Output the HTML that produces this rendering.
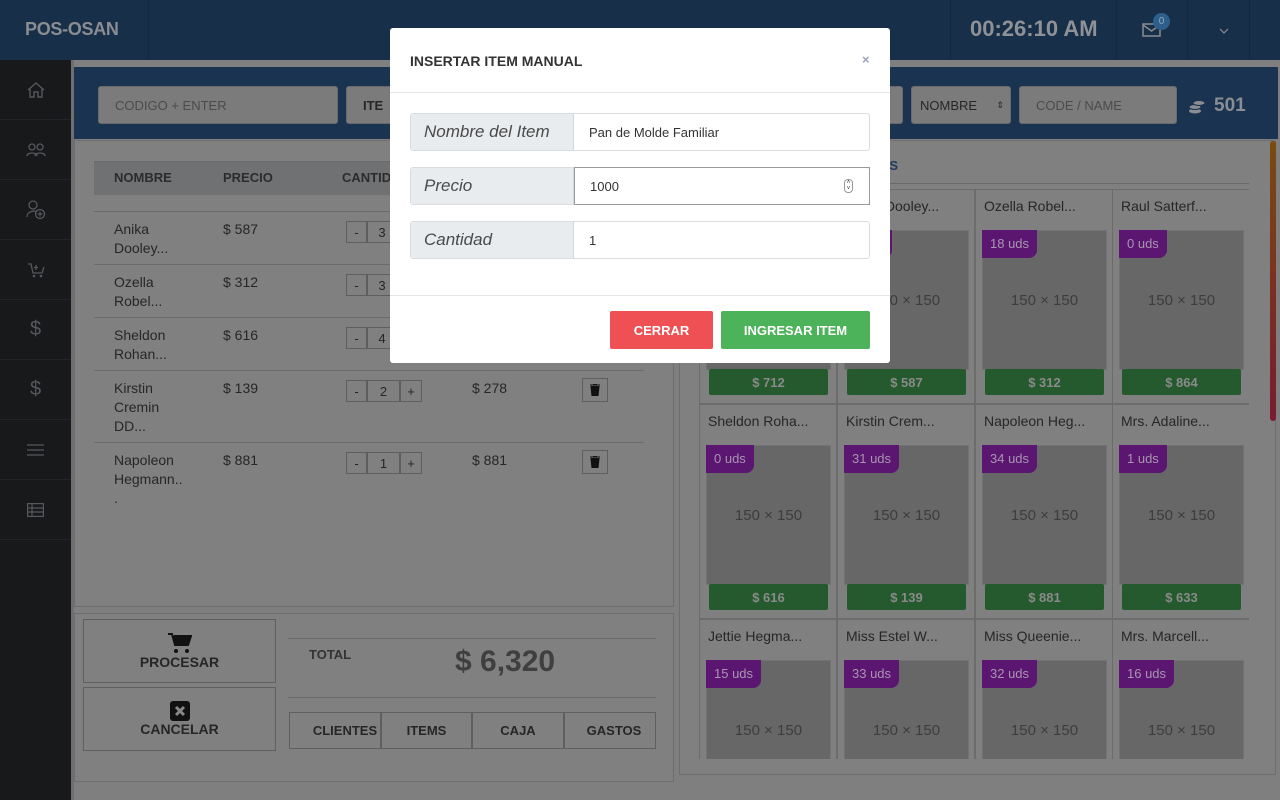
<!DOCTYPE html>
<html><head><meta charset="utf-8"><style>
*{box-sizing:border-box;margin:0;padding:0}
body{width:1280px;height:800px;overflow:hidden;background:#7f7f7f;font-family:"Liberation Sans",sans-serif;position:relative;color:#222}
.a{position:absolute}
.hdr{left:0;top:0;width:1280px;height:60px;background:#172f48}
.side{left:0;top:60px;width:71px;height:740px;background:#18191b}
.si{left:0;width:71px;height:60px;border-bottom:1px solid #222427;display:flex;align-items:center;justify-content:center}
.inp{background:#7b7b7b;border:1px solid #6a6a6a;border-radius:3px;color:#4b4b4b;font-size:13px;padding-left:16px;display:flex;align-items:center}
.panel{border:1px solid #6e6e6e;background:#808080}
.row{left:94px;width:550px;border-top:1px solid #6b6b6b;font-size:14px;color:#262626;line-height:19px}
.qty{display:flex;height:22px}
.qty span{border:1px solid #5e5e5e;display:flex;align-items:center;justify-content:center;font-size:13px}
.trash{width:26px;height:24px;border:1px solid #5e5e5e;display:flex;align-items:center;justify-content:center}
.cell{width:138px;height:215px;border:1px solid #6c6c6c}
.cell .nm{position:absolute;left:8px;top:8px;font-size:14px;color:#262626}
.cell .img{position:absolute;left:6px;top:40px;width:125px;height:140px;background:#676767;border:1px solid #737373;display:flex;align-items:center;justify-content:center;color:#3d3d3d;font-size:15px}
.cell .bd{position:absolute;left:6px;top:40px;height:28px;padding:0 8px;background:#5a1670;color:#a995b0;font-size:13px;line-height:28px;border-bottom-right-radius:8px}
.cell .pr{position:absolute;left:9px;top:179px;width:119px;height:26px;background:#255a2e;color:#8a8a8a;font-weight:bold;font-size:13px;display:flex;align-items:center;justify-content:center;border-radius:2px}
.btn2{border:1px solid #5f5f5f;font-size:13px;font-weight:bold;color:#262626;display:flex;align-items:center;justify-content:center}
.modal{left:390px;top:28px;width:500px;height:335px;background:#fff;border-radius:3px}
.grp{left:20px;width:460px;height:38px;border:1px solid #dadde0;border-radius:3px;display:flex}
.grp .l{width:163px;background:#e9ecef;border-right:1px solid #d5d8db;font-style:italic;font-size:17px;color:#4a4a4a;padding-left:13px;display:flex;align-items:center}
.grp .v{flex:1;font-size:13px;color:#333;padding-left:15px;display:flex;align-items:center}
</style></head><body>
<div class="a hdr"></div>
<div class="a" style="left:148px;top:0;width:1px;height:60px;background:#13283e"></div>
<div class="a" style="left:25px;top:19px;font-size:18px;font-weight:bold;color:#8a8d92;letter-spacing:-0.3px">POS-OSAN</div>
<div class="a" style="left:950px;top:0;width:1px;height:60px;background:#13283e"></div>
<div class="a" style="left:970px;top:16px;font-size:22px;font-weight:bold;color:#8e9196">00:26:10 AM</div>
<div class="a" style="left:1116px;top:0;width:1px;height:60px;background:#13283e"></div>
<div class="a" style="left:1187px;top:0;width:1px;height:60px;background:#13283e"></div>
<div class="a" style="left:1249px;top:0;width:1px;height:60px;background:#13283e"></div>
<svg class="a" style="left:1142px;top:23px" width="20" height="15"><rect x="1" y="1" width="17" height="12" fill="none" stroke="#8a8d92" stroke-width="1.5"/><path d="M1 2l8.5 6 8.5-6" fill="none" stroke="#8a8d92" stroke-width="1.5"/></svg>
<div class="a" style="left:1153px;top:13px;width:17px;height:17px;border-radius:50%;background:#2e5f8c;color:#8fa7bd;font-size:10px;text-align:center;line-height:17px">0</div>
<svg class="a" style="left:1219px;top:28px" width="10" height="6"><path d="M1 1l4 4 4-4" fill="none" stroke="#8a8d92" stroke-width="1.2"/></svg>

<div class="a side"></div>
<div class="a si" style="top:60px"><svg width="20" height="18"><path d="M2 9L10 2l8 7M4 7v9h4v-5h4v5h4V7" fill="none" stroke="#55585c" stroke-width="1.4"/></svg></div>
<div class="a si" style="top:120px"><svg width="20" height="14"><circle cx="6" cy="4" r="3" fill="none" stroke="#55585c" stroke-width="1.3"/><circle cx="14" cy="4" r="3" fill="none" stroke="#55585c" stroke-width="1.3"/><path d="M1 13c0-4 10-4 10 0M9 13c0-4 10-4 10 0" fill="none" stroke="#55585c" stroke-width="1.3"/></svg></div>
<div class="a si" style="top:180px"><svg width="20" height="20"><circle cx="7" cy="5" r="4" fill="none" stroke="#55585c" stroke-width="1.3"/><path d="M1 17c0-6 8-7 10-5" fill="none" stroke="#55585c" stroke-width="1.3"/><circle cx="14" cy="14" r="4.5" fill="none" stroke="#55585c" stroke-width="1.3"/><path d="M14 11.5v5M11.5 14h5" stroke="#55585c" stroke-width="1.2"/></svg></div>
<div class="a si" style="top:240px"><svg width="18" height="16"><path d="M1 2h3l2 9h9l2-6M9 3v5M7 5.5h4" fill="none" stroke="#55585c" stroke-width="1.3"/><circle cx="7" cy="14" r="1.3" fill="#55585c"/><circle cx="14" cy="14" r="1.3" fill="#55585c"/></svg></div>
<div class="a si" style="top:300px;color:#55585c;font-size:20px">$</div>
<div class="a si" style="top:360px;color:#55585c;font-size:20px">$</div>
<div class="a si" style="top:420px"><svg width="17" height="12"><path d="M0 1h17M0 6h17M0 11h17" stroke="#55585c" stroke-width="1.3"/></svg></div>
<div class="a si" style="top:480px"><svg width="17" height="14"><rect x=".6" y=".6" width="15.8" height="12.8" fill="none" stroke="#55585c" stroke-width="1.2"/><path d="M0 5h17M0 9h17M5 1v12" stroke="#55585c" stroke-width="1.2"/></svg></div>
<div class="a" style="left:71px;top:60px;width:3px;height:740px;background:#6f6f6f"></div>

<div class="a" style="left:74px;top:67px;width:1204px;height:72px;background:#1a3350"></div>
<div class="a inp" style="left:98px;top:86px;width:240px;height:38px">CODIGO + ENTER</div>
<div class="a inp" style="left:346px;top:86px;width:60px;height:38px;font-weight:bold;color:#262626">ITE</div>
<div class="a inp" style="left:870px;top:86px;width:33px;height:38px"></div>
<div class="a inp" style="left:911px;top:86px;width:100px;height:38px;color:#262626;padding-left:8px">NOMBRE<span style="position:absolute;right:6px;font-size:9px">⇕</span></div>
<div class="a inp" style="left:1019px;top:86px;width:158px;height:38px">CODE / NAME</div>
<svg class="a" style="left:1188px;top:98px" width="18" height="17"><ellipse cx="7" cy="13" rx="6" ry="2.5" fill="#8a8d92"/><ellipse cx="7" cy="9" rx="6" ry="2.5" fill="#8a8d92" stroke="#1a3350"/><ellipse cx="11" cy="5" rx="6" ry="2.5" fill="#8a8d92" stroke="#1a3350"/></svg>
<div class="a" style="left:1214px;top:95px;font-size:19px;font-weight:bold;color:#8a8d92">501</div>

<div class="a panel" style="left:74px;top:140px;width:600px;height:467px"></div>
<div class="a" style="left:94px;top:161px;width:560px;height:34px;background:#707173;border-top:1px solid #6a6a6a"></div>
<div class="a" style="left:114px;top:170px;font-size:13px;font-weight:bold;color:#2c2c2c">NOMBRE</div>
<div class="a" style="left:223px;top:170px;font-size:13px;font-weight:bold;color:#2c2c2c">PRECIO</div>
<div class="a" style="left:342px;top:170px;font-size:13px;font-weight:bold;color:#2c2c2c">CANTID</div>

<div class="a row" style="top:211px;height:53px"><div class="a" style="left:20px;top:8px">Anika<br>Dooley...</div><div class="a" style="left:129px;top:8px">$ 587</div><div class="a qty" style="left:252px;top:9px"><span style="width:21px">-</span><span style="width:30px">3</span></div></div>
<div class="a row" style="top:264px;height:53px"><div class="a" style="left:20px;top:8px">Ozella<br>Robel...</div><div class="a" style="left:129px;top:8px">$ 312</div><div class="a qty" style="left:252px;top:9px"><span style="width:21px">-</span><span style="width:30px">3</span></div></div>
<div class="a row" style="top:317px;height:53px"><div class="a" style="left:20px;top:8px">Sheldon<br>Rohan...</div><div class="a" style="left:129px;top:8px">$ 616</div><div class="a qty" style="left:252px;top:9px"><span style="width:21px">-</span><span style="width:30px">4</span></div></div>
<div class="a row" style="top:370px;height:72px"><div class="a" style="left:20px;top:8px">Kirstin<br>Cremin<br>DD...</div><div class="a" style="left:129px;top:8px">$ 139</div><div class="a qty" style="left:252px;top:9px"><span style="width:21px">-</span><span style="width:33px">2</span><span style="width:22px">+</span></div><div class="a" style="left:378px;top:8px">$ 278</div><div class="a trash" style="left:488px;top:7px"><svg width="10" height="12"><path d="M0 1h10M3 0h4M1 2.5h8l-1 9.5H2z" fill="#111" stroke="#111"/></svg></div></div>
<div class="a row" style="top:442px;height:72px"><div class="a" style="left:20px;top:8px">Napoleon<br>Hegmann..<br>.</div><div class="a" style="left:129px;top:8px">$ 881</div><div class="a qty" style="left:252px;top:9px"><span style="width:21px">-</span><span style="width:33px">1</span><span style="width:22px">+</span></div><div class="a" style="left:378px;top:8px">$ 881</div><div class="a trash" style="left:488px;top:7px"><svg width="10" height="12"><path d="M0 1h10M3 0h4M1 2.5h8l-1 9.5H2z" fill="#111" stroke="#111"/></svg></div></div>

<div class="a panel" style="left:74px;top:613px;width:600px;height:169px"></div>
<div class="a btn2" style="left:83px;top:619px;width:193px;height:64px;flex-direction:column;font-size:14px"><svg width="24" height="22"><path d="M0 2h4l3 11h13l3-9H6" fill="#111" stroke="#111" stroke-width="2"/><circle cx="8" cy="19" r="2" fill="#111"/><circle cx="19" cy="19" r="2" fill="#111"/></svg>PROCESAR</div>
<div class="a btn2" style="left:83px;top:687px;width:193px;height:64px;flex-direction:column;font-size:14px"><svg width="20" height="20"><rect width="20" height="20" rx="3" fill="#111"/><path d="M6 6l8 8M14 6l-8 8" stroke="#888" stroke-width="3"/></svg>CANCELAR</div>
<div class="a" style="left:288px;top:638px;width:368px;height:1px;background:#6a6a6a"></div>
<div class="a" style="left:309px;top:647px;font-size:13px;font-weight:bold;color:#333">TOTAL</div>
<div class="a" style="left:455px;top:645px;font-size:30px;font-weight:bold;color:#3f3f3f">$ 6,320</div>
<div class="a" style="left:288px;top:697px;width:368px;height:1px;background:#6a6a6a"></div>
<div class="a btn2" style="left:289px;top:712px;width:92px;height:37px;padding-left:20px">CLIENTES</div>
<div class="a btn2" style="left:381px;top:712px;width:91px;height:37px">ITEMS</div>
<div class="a btn2" style="left:472px;top:712px;width:92px;height:37px">CAJA</div>
<div class="a btn2" style="left:564px;top:712px;width:92px;height:37px;padding-left:8px">GASTOS</div>

<div class="a panel" style="left:679px;top:140px;width:597px;height:635px"></div>
<div class="a" style="left:1270px;top:141px;width:6px;height:280px;background:linear-gradient(#7a4a10,#7a1a30);border-radius:3px"></div>
<div class="a" style="left:880px;top:158px;font-size:13px;font-weight:bold;color:#1c3a5c">AS</div>
<div class="a" style="left:699px;top:183px;width:550px;height:1px;background:#6a6a6a"></div>
<div class="a" style="left:699px;top:189px;width:550px;height:570px;overflow:hidden">
<div class="a cell" style="left:0;top:0"><div class="nm">Anika Dooley...</div><div class="img">150 × 150</div><div class="bd">8 uds</div><div class="pr">$ 712</div></div>
<div class="a cell" style="left:138px;top:0"><div class="nm">Anika Dooley...</div><div class="img">150 × 150</div><div class="bd">9 uds</div><div class="pr">$ 587</div></div>
<div class="a cell" style="left:276px;top:0"><div class="nm">Ozella Robel...</div><div class="img">150 × 150</div><div class="bd">18 uds</div><div class="pr">$ 312</div></div>
<div class="a cell" style="left:413px;top:0"><div class="nm">Raul Satterf...</div><div class="img">150 × 150</div><div class="bd">0 uds</div><div class="pr">$ 864</div></div>
<div class="a cell" style="left:0;top:215px"><div class="nm">Sheldon Roha...</div><div class="img">150 × 150</div><div class="bd">0 uds</div><div class="pr">$ 616</div></div>
<div class="a cell" style="left:138px;top:215px"><div class="nm">Kirstin Crem...</div><div class="img">150 × 150</div><div class="bd">31 uds</div><div class="pr">$ 139</div></div>
<div class="a cell" style="left:276px;top:215px"><div class="nm">Napoleon Heg...</div><div class="img">150 × 150</div><div class="bd">34 uds</div><div class="pr">$ 881</div></div>
<div class="a cell" style="left:413px;top:215px"><div class="nm">Mrs. Adaline...</div><div class="img">150 × 150</div><div class="bd">1 uds</div><div class="pr">$ 633</div></div>
<div class="a cell" style="left:0;top:430px"><div class="nm">Jettie Hegma...</div><div class="img">150 × 150</div><div class="bd">15 uds</div></div>
<div class="a cell" style="left:138px;top:430px"><div class="nm">Miss Estel W...</div><div class="img">150 × 150</div><div class="bd">33 uds</div></div>
<div class="a cell" style="left:276px;top:430px"><div class="nm">Miss Queenie...</div><div class="img">150 × 150</div><div class="bd">32 uds</div></div>
<div class="a cell" style="left:413px;top:430px"><div class="nm">Mrs. Marcell...</div><div class="img">150 × 150</div><div class="bd">16 uds</div></div>
</div>

<div class="a modal">
<div class="a" style="left:20px;top:25px;font-size:14px;font-weight:bold;color:#333">INSERTAR ITEM MANUAL</div>
<div class="a" style="left:472px;top:24px;font-size:13px;color:#9aa3bd;font-weight:bold">×</div>
<div class="a" style="left:0;top:64px;width:500px;height:1px;background:#e5e5e5"></div>
<div class="a grp" style="top:85px"><div class="l">Nombre del Item</div><div class="v">Pan de Molde Familiar</div></div>
<div class="a grp" style="top:139px"><div class="l">Precio</div><div class="v" style="border:1px solid #9a9a9a;margin:-1px -1px -1px 0;position:relative">1000<span style="position:absolute;right:16px;top:11px;width:9px;height:14px;border:1px solid #999;border-radius:4px;font-size:6px;line-height:6px;text-align:center">˄<br>˅</span></div></div>
<div class="a grp" style="top:193px"><div class="l">Cantidad</div><div class="v">1</div></div>
<div class="a" style="left:0;top:267px;width:500px;height:1px;background:#e5e5e5"></div>
<div class="a" style="left:220px;top:283px;width:103px;height:38px;background:#ef5053;border-radius:2px;color:#fff;font-weight:bold;font-size:13px;display:flex;align-items:center;justify-content:center">CERRAR</div>
<div class="a" style="left:331px;top:283px;width:149px;height:38px;background:#4cb35a;border-radius:2px;color:#fff;font-weight:bold;font-size:13px;display:flex;align-items:center;justify-content:center">INGRESAR ITEM</div>
</div>
</body></html>
